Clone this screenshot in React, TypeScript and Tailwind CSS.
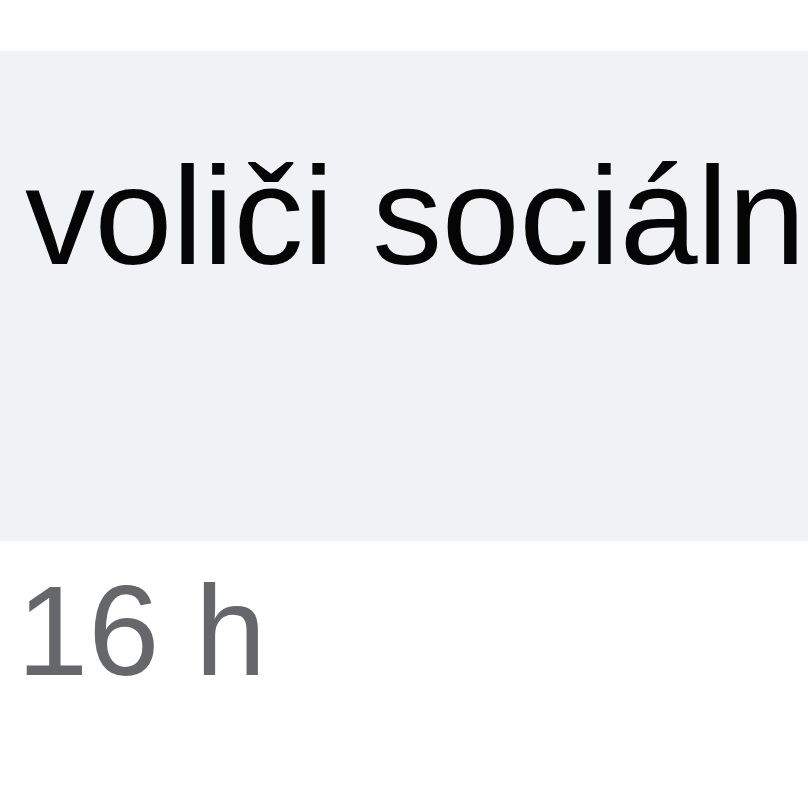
export default function App() {
  return (
    <div className="w-[808px] h-[808px] bg-white overflow-hidden pt-[51px]" style={{ fontFamily: '"Liberation Sans", Arial, sans-serif' }}>
      <div className="h-[490px] bg-[#f0f2f5] pt-[95px] pl-[25px] overflow-hidden whitespace-nowrap">
        <div className="text-[140px] leading-[140px] tracking-[-0.4px] text-[#050505]">
          voliči sociáln
        </div>
      </div>
      <div className="mt-[26px] pl-[17px] text-[128px] leading-[128px] text-[#65676b] whitespace-nowrap">
        16 h
      </div>
    </div>
  );
}
